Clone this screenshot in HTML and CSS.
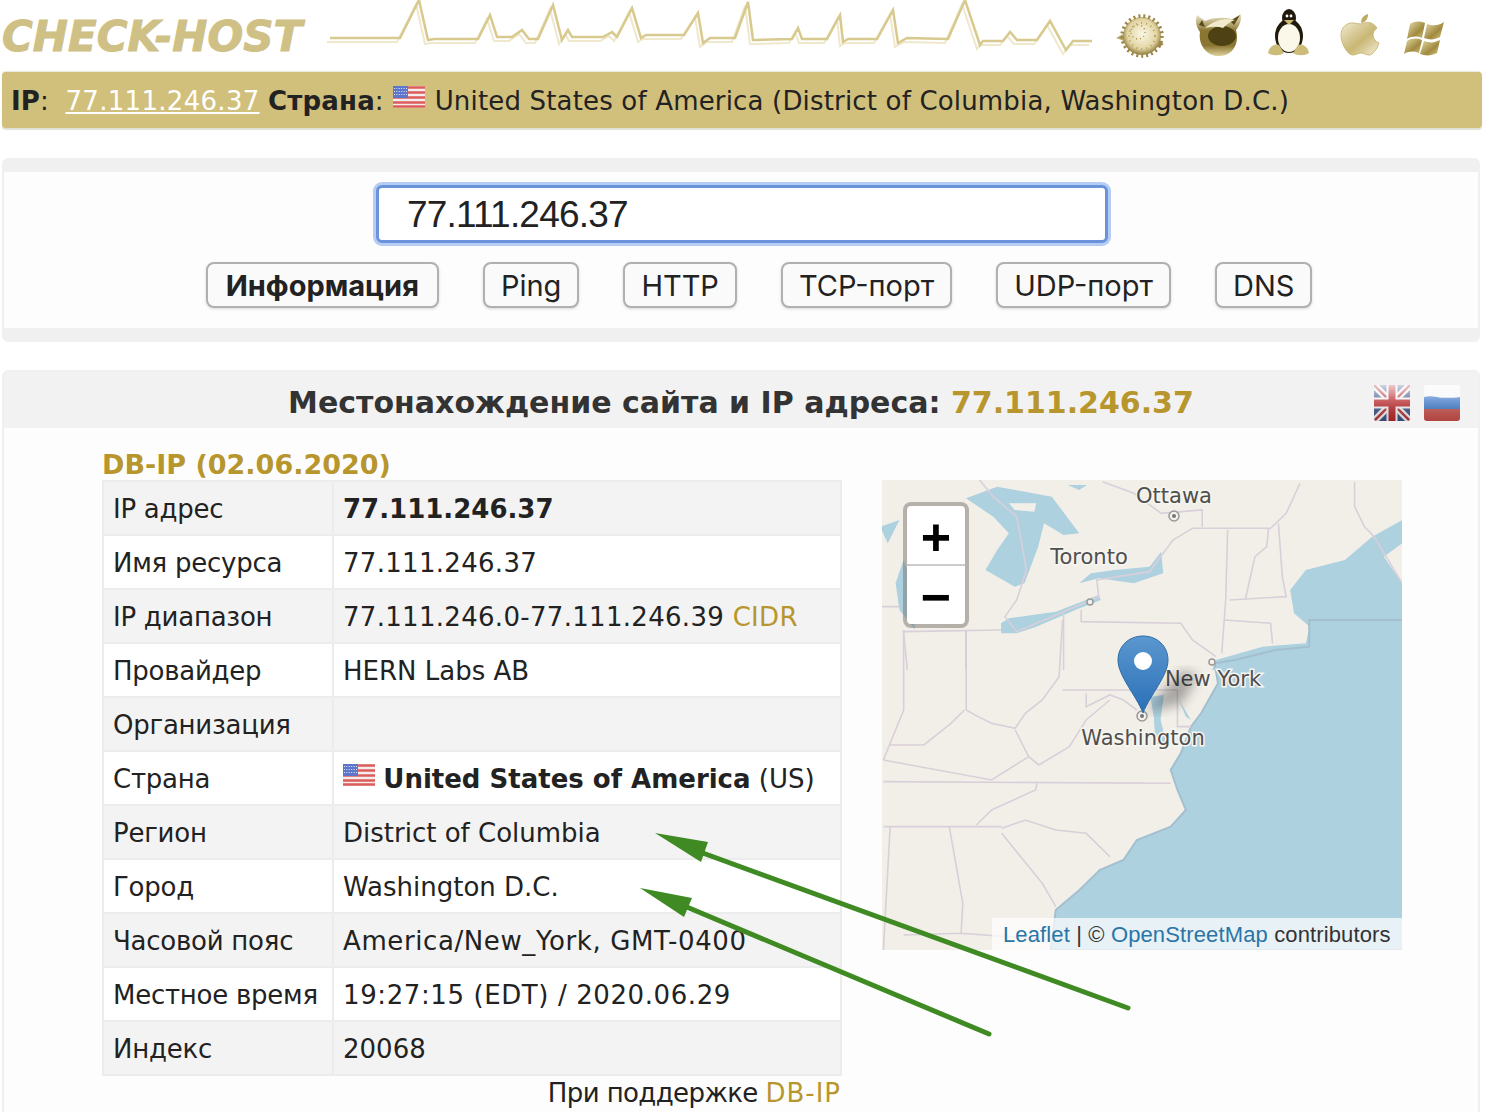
FILE: index.html
```html
<!DOCTYPE html>
<html lang="ru">
<head>
<meta charset="utf-8">
<title>Check-Host</title>
<link rel="stylesheet" href="styles.css">
</head>
<body>
<div class="page">
  <header class="top">
    <a class="logo">CHECK-HOST</a>
    <svg class="ecg" viewBox="330 0 762 60">
      <defs>
        <polyline id="ecgline" points="330,38 400,38 419,0 428,40 434,39 478,39 490,15 497,37 512,37 522,30 529,39 538,39 553,5 562,40 568,30 572,37 603,37 612,32 617,37 632,8 641,38 646,35 684,35 698,13 703,43 710,38 735,38 748,2 753,40 757,40 792,39 798,28 802,39 827,39 840,15 843,42 848,39 877,39 893,10 898,43 907,38 948,39 965,0 980,45 983,41 1003,41 1010,32 1017,40 1037,40 1050,21 1066,50 1073,41 1092,41"/>
      </defs>
      <use href="#ecgline" class="ecg-back" transform="translate(-3,4)"/>
      <use href="#ecgline" class="ecg-front"/>
    </svg>
    <div class="os-icons">
      <svg class="os" viewBox="0 0 60 60">
        <defs><radialGradient id="puff" cx=".5" cy=".45" r=".55"><stop offset="0" stop-color="#fbf7e6"/><stop offset=".7" stop-color="#e2d5a4"/><stop offset="1" stop-color="#8f7a3a"/></radialGradient></defs>
        <path d="M5 38l9-5 2 9z" fill="#b7a566"/>
        <circle cx="31" cy="36" r="19" fill="url(#puff)"/>
        <circle cx="31" cy="36" r="20" fill="none" stroke="#9a8542" stroke-width="3.5" stroke-dasharray="2 3"/>
        <circle cx="31" cy="36" r="13" fill="none" stroke="#b3a05e" stroke-width="2" stroke-dasharray="1 4"/>
        <circle cx="27" cy="32" r="7" fill="none" stroke="#a8944f" stroke-width="1.5" stroke-dasharray="1 3"/>
        <path d="M48 42l5 2-5 3z" fill="#9a8542"/>
      </svg>
      <svg class="os os-bsd" viewBox="0 0 60 60">
        <defs><linearGradient id="bsd" x1="0" y1="0" x2="0" y2="1"><stop offset="0" stop-color="#f3ecd2"/><stop offset=".4" stop-color="#8a7632"/><stop offset=".75" stop-color="#8a7632"/><stop offset="1" stop-color="#e0d29c"/></linearGradient></defs>
        <path d="M9 15 L17 21 C25 17 36 17 44 19 L53 14 C54 20 51 26 48 30 C52 44 44 56 31 56 C18 56 10 44 12 32 C8 27 7 20 9 15z" fill="url(#bsd)"/>
        <ellipse cx="34" cy="36" rx="14" ry="10" fill="#4e4114"/>
        <path d="M14 20l3 7-6-2zM52 15l-6 10-4-4z" fill="#5a4b1a"/>
        <path d="M17 28c10-9 22-10 30-8-6 2-10 6-12 8-6-2-12-1-18 0z" fill="#f1eacd"/>
      </svg>
      <svg class="os os-tux" viewBox="0 0 60 60">
        <ellipse cx="34" cy="36" rx="14" ry="17" fill="#1f1a0a"/>
        <ellipse cx="34" cy="18" rx="7" ry="9" fill="#1f1a0a"/>
        <ellipse cx="34" cy="38" rx="11" ry="14" fill="#fbf8ea"/>
        <path d="M29 20h10l-5 5z" fill="#cdb96f"/>
        <circle cx="32" cy="16" r="1.4" fill="#fff"/><circle cx="36" cy="16" r="1.4" fill="#fff"/>
        <path d="M13 53c1-6 6-10 11-8l5 8c-4 3-12 3-16 0zM54 53c-1-6-6-10-11-8l-5 8c4 3 12 3 16 0z" fill="#cdbb7a"/>
      </svg>
      <svg class="os os-apple" viewBox="0 0 60 60">
        <defs><linearGradient id="apl" x1="0" y1="0" x2="1" y2="1"><stop offset="0" stop-color="#f1ead0"/><stop offset=".55" stop-color="#c9b774"/><stop offset="1" stop-color="#f4eed8"/></linearGradient></defs>
        <path d="M33 24c3-1 8-3 12 0 2 1 3 3 4 4-6 4-5 12 2 15-2 6-6 12-10 12-3 0-5-2-8-2s-5 2-8 2c-6 0-12-12-12-20 0-8 6-12 11-12 4 0 6 1 9 1z" fill="url(#apl)" stroke="#cbb97a" stroke-width="1"/>
        <path d="M33 23c0-5 3-8 7-9 0 5-2 8-7 9z" fill="#bda961"/>
      </svg>
      <svg class="os os-win" viewBox="0 0 60 60">
        <defs><linearGradient id="win" x1="0" y1="0" x2="1" y2="1"><stop offset="0" stop-color="#e9ddb0"/><stop offset=".6" stop-color="#a08a3e"/><stop offset="1" stop-color="#d6c686"/></linearGradient></defs>
        <path d="M13 24c5-3 9-3 15-1l-3 15c-5-2-10-2-15 1z" fill="url(#win)"/>
        <path d="M30 24c6 2 11 2 17-2l-4 15c-6 3-10 3-16 1z" fill="url(#win)"/>
        <path d="M10 41c5-3 10-3 15-1l-3 13c-5-2-10-2-15 1z" fill="url(#win)"/>
        <path d="M27 41c6 2 10 2 16-1l-3 13c-6 3-11 3-17 1z" fill="url(#win)"/>
      </svg>
    </div>
  </header>

  <div class="ipbar">
    <b>IP</b>: <a class="ipbar-link">77.111.246.37</a> <b>Страна</b>:
    <svg class="flag-us flag-bar" viewBox="0 0 32 22">
      <use href="#us-flag"/>
    </svg>
    United States of America (District of Columbia, Washington D.C.)
  </div>

  <section class="panel search">
    <div class="search-body">
      <div class="search-input">77.111.246.37</div>
      <nav class="tabs">
        <button class="tab tab-active">Информация</button>
        <button class="tab">Ping</button>
        <button class="tab">HTTP</button>
        <button class="tab">TCP-порт</button>
        <button class="tab">UDP-порт</button>
        <button class="tab">DNS</button>
      </nav>
    </div>
  </section>

  <section class="panel result">
    <div class="result-head">
      <span></span>
      <h1 class="result-title">Местонахождение сайта и IP адреса: <span class="gold">77.111.246.37</span></h1>
      <div class="langs">
        <svg class="lang" viewBox="0 0 36 36">
          <defs>
            <clipPath id="rc"><rect width="36" height="36" rx="3"/></clipPath>
            <linearGradient id="gloss" x1="0" y1="0" x2="0" y2="1"><stop offset="0" stop-color="#fff" stop-opacity=".75"/><stop offset=".45" stop-color="#fff" stop-opacity=".25"/><stop offset="1" stop-color="#000" stop-opacity=".12"/></linearGradient>
          </defs>
          <g clip-path="url(#rc)">
            <rect width="36" height="36" fill="#3c5488"/>
            <path d="M0 0l36 36M36 0L0 36" stroke="#f4f4f4" stroke-width="7"/>
            <path d="M0 0l36 36M36 0L0 36" stroke="#b8383c" stroke-width="2.5"/>
            <path d="M18 0v36M0 18h36" stroke="#f4f4f4" stroke-width="11"/>
            <path d="M18 0v36M0 18h36" stroke="#b8282c" stroke-width="7"/>
            <rect width="36" height="36" fill="url(#gloss)"/>
          </g>
        </svg>
        <svg class="lang" viewBox="0 0 36 36">
          <g clip-path="url(#rc)">
            <rect width="36" height="13" fill="#f6f6f6"/>
            <path d="M0 12c9-3 14 3 36 0v13H0z" fill="#3f78c8"/>
            <rect y="24" width="36" height="12" fill="#c9504a"/>
            <rect width="36" height="36" fill="url(#gloss)"/>
          </g>
        </svg>
      </div>
    </div>
    <div class="result-body">
      <h2 class="source gold">DB-IP (02.06.2020)</h2>
      <span></span>
      <div class="info">
        <table class="info-table">
          <tr><td class="k">IP адрес</td><td class="v"><b>77.111.246.37</b></td></tr>
          <tr><td class="k">Имя ресурса</td><td class="v wide">77.111.246.37</td></tr>
          <tr><td class="k">IP диапазон</td><td class="v wide">77.111.246.0-77.111.246.39 <span class="gold-l">CIDR</span></td></tr>
          <tr><td class="k">Провайдер</td><td class="v">HERN Labs AB</td></tr>
          <tr><td class="k">Организация</td><td class="v"></td></tr>
          <tr><td class="k">Страна</td><td class="v"><svg class="flag-us flag-cell" viewBox="0 0 32 22"><use href="#us-flag"/></svg> <b>United States of America</b> (US)</td></tr>
          <tr><td class="k">Регион</td><td class="v">District of Columbia</td></tr>
          <tr><td class="k">Город</td><td class="v">Washington D.C.</td></tr>
          <tr><td class="k">Часовой пояс</td><td class="v wider">America/New_York, GMT-0400</td></tr>
          <tr><td class="k">Местное время</td><td class="v wider">19:27:15 (EDT) / 2020.06.29</td></tr>
          <tr><td class="k">Индекс</td><td class="v">20068</td></tr>
        </table>
        <p class="credit">При поддержке <span class="gold-l">DB-IP</span></p>
      </div>
      <div class="map">
        <svg class="map-svg" viewBox="0 0 520 470">
          <defs>
            <filter id="blur"><feGaussianBlur stdDeviation="6"/></filter>
            <filter id="soft" x="-5%" y="-5%" width="110%" height="110%"><feGaussianBlur stdDeviation=".7"/></filter>
            <linearGradient id="pin" x1="0" y1="0" x2="0" y2="1"><stop offset="0" stop-color="#5b97cf"/><stop offset="1" stop-color="#2a70b8"/></linearGradient>
          </defs>
          <rect width="520" height="470" fill="#f2efe9"/>
          <g filter="url(#soft)">
            <g transform="translate(-2,-110) scale(.3906,.3333)">
              <g class="water">
                <path d="M1337,450 L1260,500 L1190,570 L1090,600 L1050,660 L1060,730 L1100,770 L1090,820 L980,830 L860,870 L850,900 L1337,900Z"/>
                <path d="M220,385 L300,350 L440,380 L510,490 L470,495 L420,460 L405,530 L370,640 L345,650 L270,600 L300,540 L330,490 L290,440Z"/>
                <path d="M310,760 L330,745 L450,725 L560,675 L565,690 L500,720 L400,770 L350,790 L310,790Z"/>
                <path d="M510,640 L540,610 L600,600 L690,590 L720,545 L725,610 L650,640 L560,625Z"/>
                <path d="M60,570 L40,640 L50,720 L90,780 L70,600Z"/>
                <path d="M480,345 L530,345 L510,360Z"/>
                <path d="M0,470 L50,450 L20,520Z"/>
                <path d="M1337,520 L1290,560 L1337,640Z" class="land-fill"/>
                <path d="M330,400 L400,400 L395,425 L345,420Z" class="land-fill"/>
              </g>
              <g class="border">
                <path d="M255,330 L290,380 L350,440 L375,600 L350,690 L320,740 L350,785 L440,740 L560,680 L555,630 L690,605 L750,510 L800,475 L1000,475 L1040,430 L1075,340"/>
                <path d="M570,335 L650,370 L720,430 L825,420 L825,470"/>
                <path d="M470,730 L470,900M515,720 L515,755 L770,760 L800,810 L860,860M890,480 L885,690 L875,850M1020,460 L1030,620 L1040,680 L895,690M995,475 L990,530 L960,560 L935,690M880,750 L1000,760 L1005,820M1215,335 L1215,410 L1240,470 L1265,500M220,780 L220,900M60,780 L70,900M0,710 L50,710M60,785 L310,780M1265,500 L1337,640"/>
              </g>
            </g>
            <g transform="translate(-2,140) scale(.338,.3333)">
              <g class="water">
                <path class="coast" d="M1270,0 L1270,80 L1170,90 L1050,120 L990,130 L1000,190 L950,280 L920,320 L890,400 L860,450 L880,510 L905,570 L860,620 L760,660 L720,720 L650,750 L590,810 L520,870 L505,990 L1580,990 L1580,0Z"/>
                <path d="M800,230 L840,225 L830,300 L850,380 L815,370 L810,290Z"/>
                <path d="M885,240 L920,300 L905,290Z"/>
              </g>
              <g class="border">
                <path d="M70,30 L70,270 L30,370 L10,420M255,30 L255,270M255,270 L290,290 L330,310 L400,325 L430,280 L480,240 L530,170 L540,0M540,210 L880,210M610,220 L610,260 L680,225 L720,240 L760,270M880,210 L880,320 L920,320M30,375 L130,375 L210,310 L250,270M400,330 L440,410 L470,435 L560,380 L610,300 L680,240M10,420 L330,480 L440,410M10,485 L860,490M285,615 L330,570 L460,510 L465,490M10,620 L360,620M360,625 L430,600 L520,630 L610,640 L680,710M360,640 L400,690 L480,790 L520,860M30,620 L10,990M205,620 L245,850 L240,940M70,945 L240,940 L510,960"/>
              </g>
            </g>
          </g>
          <circle cx="292" cy="36" r="5" class="city"/><circle cx="292" cy="36" r="2" fill="#777"/>
          <circle cx="208" cy="122" r="3" class="city"/>
          <circle cx="330" cy="182" r="3" class="city"/>
          <circle cx="260" cy="236" r="5" class="city"/><circle cx="260" cy="236" r="2" fill="#777"/>
          <text x="292" y="23" class="city-label">Ottawa</text>
          <text x="207" y="84" class="city-label">Toronto</text>
          <text x="331" y="206" class="city-label">New York</text>
          <text x="261" y="265" class="city-label">Washington</text>
          <path d="M262 232 L300 190 L316 196 L300 224Z" fill="#000" opacity=".3" filter="url(#blur)"/>
          <path class="pin" d="M261 233C254 215 236 196 236 180C236 166 247 156 261 156C275 156 286 166 286 180C286 196 268 215 261 233Z" fill="url(#pin)"/>
          <circle cx="261" cy="181" r="9" fill="#fff"/>
        </svg>
        <div class="zoom">
          <div class="zoom-btn zoom-in">+</div>
          <div class="zoom-btn">−</div>
        </div>
        <div class="attribution"><span class="osm">Leaflet</span> | © <span class="osm">OpenStreetMap</span> contributors</div>
      </div>
    </div>
  </section>

  <svg class="hidden-defs" width="0" height="0">
    <defs>
      <g id="us-flag">
        <rect width="32" height="22" fill="#f5eded"/>
        <path d="M0 1.5h32M0 6.5h32M0 11.5h32M0 16.5h32M0 20.5h32" stroke="#dc5c5c" stroke-width="2.4"/>
        <rect width="15" height="12" fill="#5d76c9"/>
        <path d="M1 2.5h13M1 5.5h13M1 8.5h13" stroke="#dfe5f5" stroke-width="1.1" stroke-dasharray="1 1.4"/>
      </g>
    </defs>
  </svg>

  <svg class="arrows" viewBox="0 0 1492 1112">
    <g class="arrow-shaft">
      <path d="M1128,1008 L700,852"/>
      <path d="M989,1034 L682,905"/>
    </g>
    <g class="arrow-head">
      <path d="M655,833 L708,842 L701,862Z"/>
      <path d="M640,888 L692,898 L684,917Z"/>
    </g>
  </svg>
</div>
</body>
</html>
```
FILE: styles.css
```css
html, body {
  margin: 0;
  padding: 0;
  background: #fff;
  height: 1112px;
  overflow: hidden;
}
body {
  font-family: "DejaVu Sans", Verdana, sans-serif;
  font-size: 26px;
  color: #222;
}
.page {
  position: relative;
  height: 1112px;
  overflow: hidden;
  padding: 0 0 0 2px;
}
.top {
  display: flex;
  align-items: flex-start;
  height: 72px;
}
.logo {
  display: block;
  width: 328px;
  flex: none;
  height: 72px;
  line-height: 74px;
  font-family: "DejaVu Sans", sans-serif;
  font-weight: 700;
  font-style: italic;
  font-size: 42px;
  letter-spacing: 0;
  color: #cfc086;
  -webkit-text-stroke: 1px #cfc086;
  white-space: nowrap;
}
.ecg {
  width: 762px;
  height: 60px;
  flex: none;
  overflow: visible;
}
.ecg-front, .ecg-back {
  fill: none;
}
.ecg-front { stroke: #d8c98e; stroke-width: 2.5; }
.ecg-back { stroke: #efe8cc; stroke-width: 2; }
.os-icons {
  display: flex;
  gap: 11px;
  margin-left: 19px;
}
.os {
  width: 60px;
  height: 60px;
  flex: none;
  filter: blur(.6px);
}
.os-bsd { margin-left: 6px; }
.os-tux { margin-left: -4px; }
.os-apple { margin-left: 2px; }
.os-win { margin-left: -2px; }
.ipbar {
  width: 1480px;
  height: 56px;
  box-sizing: border-box;
  padding-left: 9px;
  line-height: 58px;
  background: #d1bf7c;
  border-radius: 4px;
  box-shadow: 0 2px 1px #e2e0d6, 0 -1px 1px #e8e6dc;
  white-space: nowrap;
  letter-spacing: .17px;
}
.ipbar-link {
  color: #fff;
  text-decoration: underline;
  margin-left: 8px;
  letter-spacing: .3px;
}
.flag-us {
  width: 32px;
  height: 22px;
  vertical-align: 2px;
}
.flag-bar {
  margin: 0 1px 0 1px;
}
.panel {
  width: 1478px;
  box-sizing: border-box;
  border: 2px solid #f0f0f0;
  border-radius: 6px;
  background: #fdfdfd;
}
.search {
  margin-top: 30px;
  height: 184px;
  border-top-width: 14px;
  border-bottom-width: 14px;
}
.search-body {
  display: flex;
  flex-direction: column;
  align-items: center;
  padding-top: 13px;
}
.search-input {
  width: 732px;
  height: 58px;
  box-sizing: border-box;
  padding-left: 28px;
  margin-left: 2px;
  line-height: 54px;
  font-family: "Liberation Sans", Arial, sans-serif;
  font-size: 37px;
  letter-spacing: -.8px;
  color: #222;
  background: #fff;
  border: 3px solid #6a93dc;
  border-radius: 6px;
  box-shadow: 0 0 0 3px #b5ccf3;
}
.tabs {
  display: flex;
  gap: 44px;
  margin-top: 19px;
  margin-left: 36px;
}
.tab {
  height: 46px;
  padding: 0 16px;
  box-sizing: border-box;
  font-family: Inter, "Liberation Sans", sans-serif;
  font-size: 29px;
  line-height: 44px;
  color: #222;
  background: #fafafa;
  border: 2px solid #b0b0b0;
  border-radius: 8px;
  box-shadow: 0 1px 3px rgba(0, 0, 0, .15);
}
.tab-active {
  font-weight: 700;
  padding: 0 18px;
}
.result {
  margin-top: 28px;
  height: 900px;
}
.result-head {
  display: grid;
  grid-template-columns: 1fr auto 1fr;
  align-items: center;
  height: 56px;
  box-sizing: border-box;
  background: #f2f2f2;
  padding: 5px 18px 0;
}
.result-title {
  margin: 0;
  font-size: 30px;
  font-weight: 700;
  color: #333;
  white-space: nowrap;
}
.gold { color: #b8962e; }
.gold-l { color: #b8962e; }
.langs {
  display: flex;
  gap: 14px;
  justify-self: end;
}
.lang {
  width: 36px;
  height: 36px;
  flex: none;
}
.result-body {
  display: grid;
  grid-template-columns: 740px 520px;
  grid-template-rows: 52px auto;
  column-gap: 40px;
  padding-left: 98px;
}
.source {
  margin: 0 0 2px;
  align-self: end;
  font-size: 27px;
  line-height: 26px;
  font-weight: 700;
  white-space: nowrap;
}
.info-table {
  width: 740px;
  border-collapse: collapse;
  table-layout: fixed;
}
.info-table td {
  height: 54px;
  padding: 2px 0 0 9px;
  border: 2px solid #ececec;
  box-sizing: border-box;
  white-space: nowrap;
}
.info-table tr:nth-child(odd) td { background: #f3f3f3; }
.info-table tr:nth-child(even) td { background: #fff; }
.k {
  width: 230px;
  letter-spacing: -.25px;
}
.wide { letter-spacing: .3px; }
.wider { letter-spacing: .6px; }
.credit {
  margin: 0;
  text-align: right;
  line-height: 34px;
  padding-right: 1px;
  letter-spacing: -.6px;
}
.credit .gold-l { letter-spacing: 1px; }
.map {
  position: relative;
  width: 520px;
  height: 470px;
  overflow: hidden;
}
.map-svg {
  display: block;
  width: 520px;
  height: 470px;
}
.water path { fill: #aed1e0; }
.water .coast { stroke: #a4bfce; stroke-width: 2; vector-effect: non-scaling-stroke; }
.water .land-fill { fill: #f2efe9; }
.border path {
  fill: none;
  stroke: #d9cfd9;
  stroke-width: 1.6;
  vector-effect: non-scaling-stroke;
}
.city { fill: #f4f2ec; stroke: #999; stroke-width: 1.5; }
.city-label {
  font-family: "DejaVu Sans", sans-serif;
  font-size: 21px;
  fill: #4f4f4f;
  text-anchor: middle;
  stroke: #f7f5f0;
  stroke-width: 3px;
  paint-order: stroke;
}
.pin { stroke: #2f6ea6; stroke-width: 1; }
.zoom {
  position: absolute;
  left: 21px;
  top: 22px;
  width: 66px;
  border: 4px solid rgba(120, 115, 108, .5);
  box-sizing: border-box;
  border-radius: 8px;
  background: #fff;
  background-clip: padding-box;
  overflow: hidden;
}
.zoom-btn {
  height: 58px;
  text-align: center;
  line-height: 62px;
  font-family: "Liberation Sans", sans-serif;
  font-weight: 700;
  font-size: 52px;
  color: #000;
}
.zoom-in { border-bottom: 2px solid #ccc; }
.attribution {
  position: absolute;
  right: 0;
  bottom: 0;
  width: 410px;
  height: 32px;
  box-sizing: border-box;
  padding-left: 11px;
  line-height: 33px;
  background: rgba(255, 255, 255, .7);
  font-family: "Liberation Sans", Arial, sans-serif;
  font-size: 22px;
  letter-spacing: .13px;
  color: #333;
  white-space: nowrap;
}
.osm { color: #2a75a8; }
.hidden-defs { position: absolute; }
.arrows {
  position: absolute;
  left: 0;
  top: 0;
  width: 1492px;
  height: 1112px;
  pointer-events: none;
}
.arrow-shaft path {
  fill: none;
  stroke: #3f8a23;
  stroke-width: 5;
  stroke-linecap: round;
}
.arrow-head path { fill: #3f8a23; }
```
